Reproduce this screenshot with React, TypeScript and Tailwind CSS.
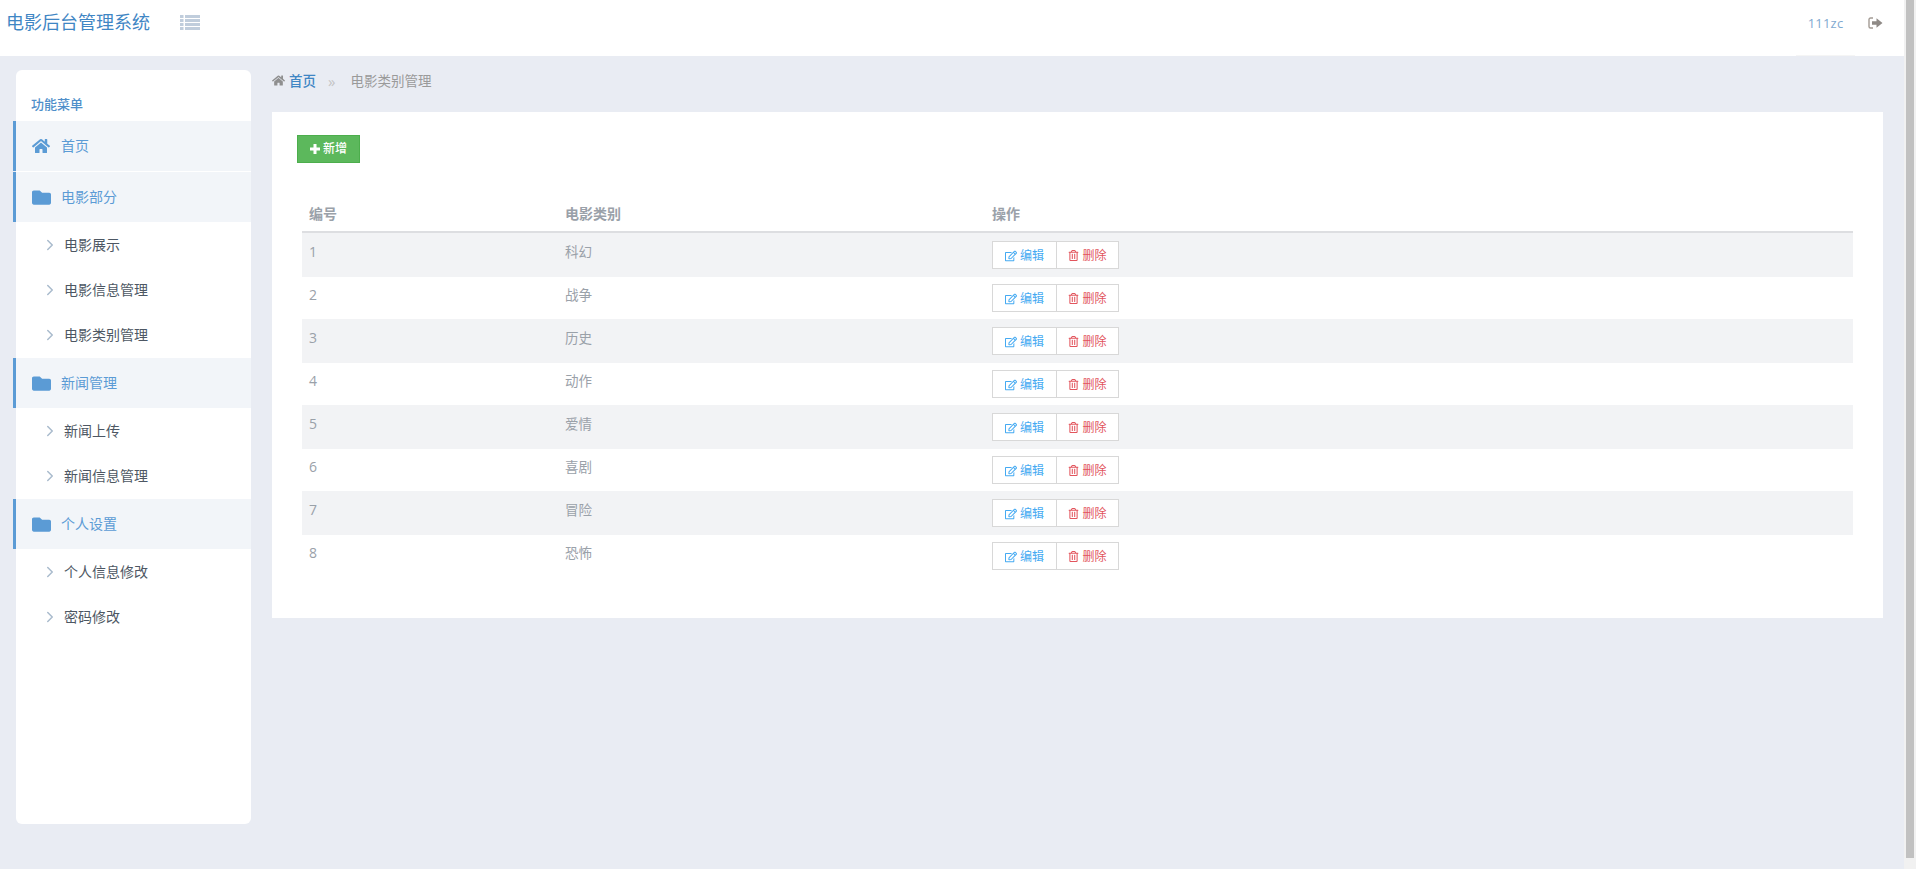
import React from "react";
import { ChevronRight } from "lucide-react";
import { FaFolder, FaHome, FaRegEdit, FaRegTrashAlt } from "react-icons/fa";

const font = { fontFamily: '"Open Sans", "Noto Sans CJK SC", sans-serif' };

const groups = [
  { title: "电影部分", items: ["电影展示", "电影信息管理", "电影类别管理"] },
  { title: "新闻管理", items: ["新闻上传", "新闻信息管理"] },
  { title: "个人设置", items: ["个人信息修改", "密码修改"] },
];

const rows = ["科幻", "战争", "历史", "动作", "爱情", "喜剧", "冒险", "恐怖"];

function SignOut() {
  return (
    <svg width="15" height="14" viewBox="0 0 15 14" fill="none">
      <path d="M5 2H2.500C1.700 2 1 2.700 1 3.500v7c0 .8.7 1.500 1.500 1.500H5" stroke="#a39b94" strokeWidth="1.400" />
      <path d="M4 5.200h4.500V2.300L14.500 7l-6 4.700V8.800H4z" fill="#8f8a86" />
    </svg>
  );
}

function ListIcon() {
  return (
    <svg width="20" height="15" viewBox="0 0 20 15" fill="#c0cddc">
      {[0, 4, 8, 12].map((y) => (
        <g key={y}>
          <rect x="0" y={y} width="3.500" height="3" />
          <rect x="5" y={y} width="15" height="3" />
        </g>
      ))}
    </svg>
  );
}

function PlusIcon() {
  return (
    <svg width="10" height="10" viewBox="0 0 10 10" fill="currentColor">
      <path d="M3.500 0h3v3.500H10v3H6.500V10h-3V6.500H0v-3h3.500z" />
    </svg>
  );
}

function MenuHead({ icon, title }: { icon: React.ReactNode; title: string }) {
  return (
    <div className="-ml-[3px] flex h-[50px] items-center border-l-[3px] border-[#5b9bd5] bg-[#f2f5f9] pl-4 text-sm text-[#5b9bd5]">
      <span className="flex w-[29px] text-[#5b9bd5]">{icon}</span>
      {title}
    </div>
  );
}

function MenuItem({ label }: { label: string }) {
  return (
    <div className="flex h-[45px] items-center pl-[25px] text-sm text-[#4d5763]">
      <ChevronRight size={18} strokeWidth={2} className="mr-[5px] text-[#a9bbcd]" />
      {label}
    </div>
  );
}

function Sidebar() {
  return (
    <aside className="h-[754px] w-[235px] shrink-0 rounded-md bg-white">
      <div className="pt-[25px] pb-[7px] pl-[15px] text-[13px] leading-[19px] font-medium text-[#4f8fca]">功能菜单</div>
      <div className="mb-px">
        <MenuHead icon={<FaHome size={18} />} title="首页" />
      </div>
      {groups.map((g) => (
        <div key={g.title} className="mb-px">
          <MenuHead icon={<FaFolder size={19} />} title={g.title} />
          {g.items.map((item) => (
            <MenuItem key={item} label={item} />
          ))}
        </div>
      ))}
    </aside>
  );
}

function TableRow({ id, name }: { id: number; name: string }) {
  const odd = id % 2 === 1;
  return (
    <div className={`grid grid-cols-[256px_427px_1fr] items-start text-[13.5px] text-[#9aa1a9] ${odd ? "h-[44px] bg-[#f2f3f5] pt-2" : "h-[42px] pt-[7px]"}`}>
      <div className="pl-[7px] text-sm leading-[22px]">{id}</div>
      <div className="pl-[7px] leading-[22px]">{name}</div>
      <div className="flex pl-[7px] text-xs">
        <button className="flex h-[28px] w-[65px] items-center justify-center gap-[3px] border border-[#d8d8d8] bg-white pt-px text-[#45aaf2]">
          <FaRegEdit size={12} />
          编辑
        </button>
        <button className="-ml-px flex h-[28px] w-[63px] items-center justify-center gap-[3px] border border-[#d8d8d8] bg-white pt-px text-[#e2545c]">
          <FaRegTrashAlt size={11} />
          删除
        </button>
      </div>
    </div>
  );
}

export default function App() {
  return (
    <div style={font} className="flex h-[869px] w-full overflow-hidden bg-[#e9ecf3]">
      <div className="flex min-w-0 flex-1 flex-col">
        <header className="flex h-[56px] shrink-0 items-start bg-white">
          <div className="pt-[9px] pl-[6px] text-lg leading-[26px] text-[#3f86c4]">电影后台管理系统</div>
          <span className="mt-[15px] ml-[30px] flex">
            <ListIcon />
          </span>
          <div className="ml-auto flex items-start pr-[21px]">
            <span className="flex h-[56px] w-[59px] justify-center border-b border-[#f5f5f5] pt-[16px] text-[13px] leading-[14px] tracking-[0.2px] text-[#7fa9d0]">
              111zc
            </span>
            <span className="mt-[16px] ml-[13px] flex">
              <SignOut />
            </span>
          </div>
        </header>
        <div className="flex min-h-0 flex-1 pt-[14px] pr-[21px] pl-4">
          <Sidebar />
          <main className="ml-[21px] min-w-0 flex-1">
            <div className="flex h-[42px] items-start text-[13.5px] leading-[22px] text-[#9a9a9a]">
              <FaHome size={13} className="mt-[4px] text-[#8f8f8f]" />
              <span className="ml-[4px] font-medium text-[#3f86c4]">首页</span>
              <span className="ml-3 text-[15px] leading-[22px] text-[#c4c4c4]">»</span>
              <span className="ml-[15px]">电影类别管理</span>
            </div>
            <section className="h-[506px] bg-white pt-[23px] pr-[30px] pl-[25px]">
              <button className="flex h-[28px] w-[63px] items-center justify-center gap-[3px] border border-[#4cae4c] bg-[#5cb85c] text-xs font-medium text-white">
                <PlusIcon />
                新增
              </button>
              <div className="mt-[30px] ml-[5px]">
                <div className="grid h-[40px] grid-cols-[256px_427px_1fr] items-center border-b-2 border-[#dddee1] pt-[4px] text-sm font-semibold text-[#9aa1a9]">
                  <div className="pl-[7px]">编号</div>
                  <div className="pl-[7px]">电影类别</div>
                  <div className="pl-[7px]">操作</div>
                </div>
                {rows.map((name, i) => (
                  <TableRow key={name} id={i + 1} name={name} />
                ))}
              </div>
            </section>
          </main>
        </div>
      </div>
      <div className="flex h-full w-3 shrink-0 justify-center bg-[#f1f1f1]">
        <div className="h-[858px] w-2 bg-[#c1c1c1]" />
      </div>
    </div>
  );
}
